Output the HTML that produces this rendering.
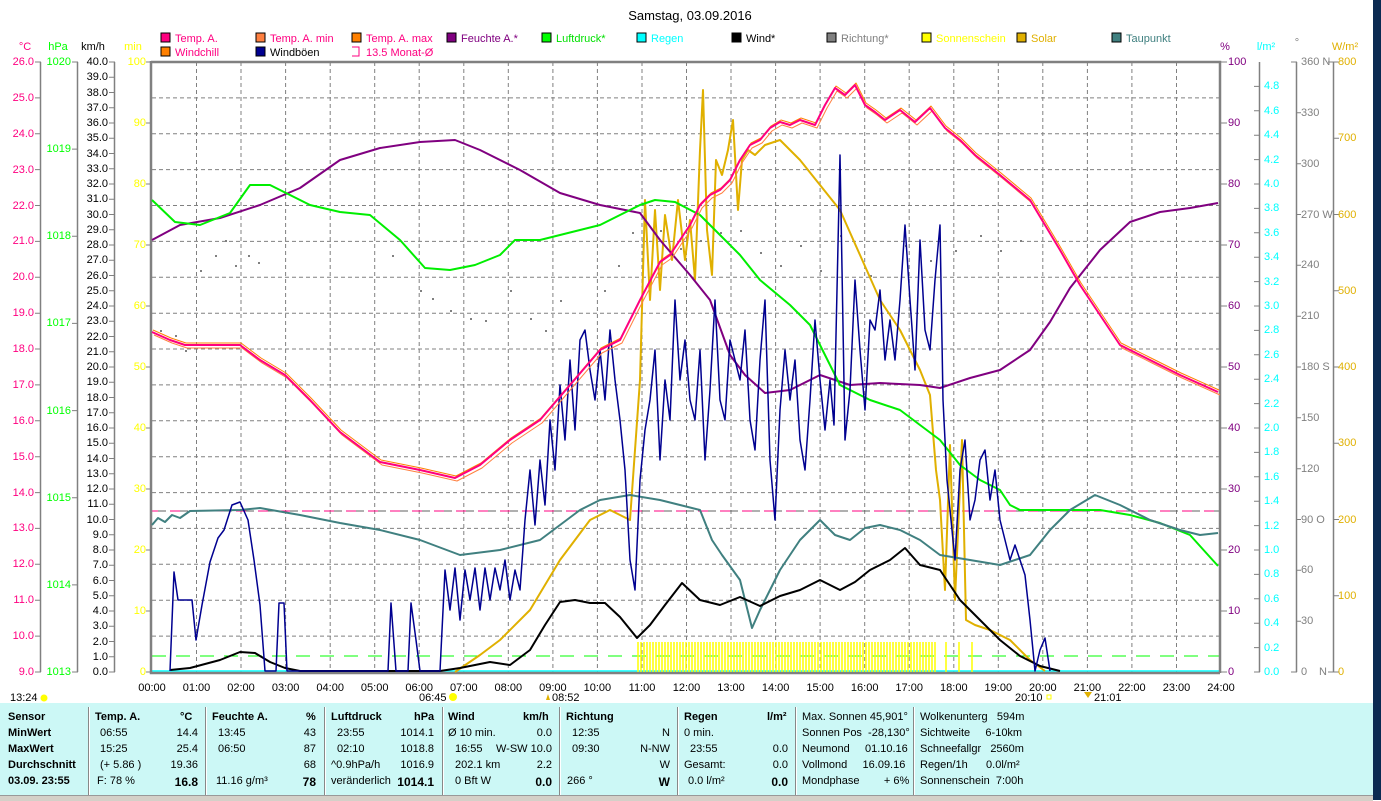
<!DOCTYPE html>
<html><head><meta charset="utf-8"><style>
html,body{margin:0;padding:0;background:#fff;width:1381px;height:800px;overflow:hidden;font-family:"Liberation Sans",sans-serif;}
svg{position:absolute;left:0;top:0}
#panel{position:absolute;left:0;top:703px;width:1373px;height:92px;background:#ccf8f6;font-size:11px;color:#000}
#panel div{position:absolute;white-space:nowrap}
.b{font-weight:bold}
.r{text-align:right}
.sep{position:absolute;top:4px;width:1px;height:88px;background:#888;border-right:1px solid #fff}
#rb{position:absolute;left:1373px;top:0;width:8px;height:800px;background:#0b2a52}
#sb{position:absolute;left:0;top:795px;width:1373px;height:5px;background:#d4d0c8;border-top:1px solid #999}
</style></head><body>
<svg width="1381" height="800" xmlns="http://www.w3.org/2000/svg" font-family="Liberation Sans, sans-serif" font-size="11">
<text x="690" y="20" text-anchor="middle" font-size="13" fill="#000">Samstag, 03.09.2016</text>
<!-- legend -->
<g stroke="#000" stroke-width="1">
<rect x="161" y="33" width="9" height="9" fill="#ff0080"/><rect x="256" y="33" width="9" height="9" fill="#ff8040"/><rect x="352" y="33" width="9" height="9" fill="#ff8000"/><rect x="447" y="33" width="9" height="9" fill="#800080"/><rect x="542" y="33" width="9" height="9" fill="#00ff00"/><rect x="637" y="33" width="9" height="9" fill="#00ffff"/><rect x="732" y="33" width="9" height="9" fill="#000"/><rect x="827" y="33" width="9" height="9" fill="#808080"/><rect x="922" y="33" width="9" height="9" fill="#ffff00"/><rect x="1017" y="33" width="9" height="9" fill="#e0b000"/><rect x="1112" y="33" width="9" height="9" fill="#408080"/>
<rect x="161" y="47" width="9" height="9" fill="#ff8000"/><rect x="256" y="47" width="9" height="9" fill="#000090"/>
</g>
<path d="M352 47h7v9h-7" fill="none" stroke="#ff0080"/>
<g fill="#ff0080"><text x="175" y="42">Temp. A.</text><text x="270" y="42">Temp. A. min</text><text x="366" y="42">Temp. A. max</text><text x="175" y="56">Windchill</text><text x="366" y="56">13.5 Monat-Ø</text></g>
<text x="270" y="56" fill="#000">Windböen</text>
<text x="461" y="42" fill="#800080">Feuchte A.*</text><text x="556" y="42" fill="#00e000">Luftdruck*</text><text x="651" y="42" fill="#00ffff">Regen</text><text x="746" y="42" fill="#000">Wind*</text><text x="841" y="42" fill="#808080">Richtung*</text><text x="936" y="42" fill="#ffff00">Sonnenschein</text><text x="1031" y="42" fill="#e0b000">Solar</text><text x="1126" y="42" fill="#408080">Taupunkt</text>
<!-- units -->
<text x="25" y="50" text-anchor="middle" fill="#ff0080">°C</text><text x="58" y="50" text-anchor="middle" fill="#00ff00">hPa</text><text x="93" y="50" text-anchor="middle">km/h</text><text x="133" y="50" text-anchor="middle" fill="#ffff00">min</text>
<text x="1225" y="50" text-anchor="middle" fill="#800080">%</text><text x="1266" y="50" text-anchor="middle" fill="#00ffff">l/m²</text><text x="1297" y="46" text-anchor="middle" fill="#808080">°</text><text x="1345" y="50" text-anchor="middle" fill="#e0b000">W/m²</text>
<!-- axis lines -->
<g stroke="#808080" stroke-width="1.5" fill="none">
<path d="M40.5 62V672M77.5 62V672M114.5 62V672M1259.5 62V672M1296.5 62V672M1333.5 62V672"/>
</g>
<g stroke="#808080" stroke-width="1">
<path d="M35 62h6M35 97.9h6M35 133.8h6M35 169.6h6M35 205.5h6M35 241.4h6M35 277.3h6M35 313.2h6M35 349h6M35 384.9h6M35 420.8h6M35 456.7h6M35 492.6h6M35 528.4h6M35 564.3h6M35 600.2h6M35 636.1h6M35 672h6"/>
<path d="M72 62h6M72 149.1h6M72 236.3h6M72 323.4h6M72 410.6h6M72 497.7h6M72 584.9h6M72 672h6"/>
<path d="M109 62h6M109 77.25h6M109 92.5h6M109 107.75h6M109 123h6M109 138.25h6M109 153.5h6M109 168.75h6M109 184h6M109 199.25h6M109 214.5h6M109 229.75h6M109 245h6M109 260.25h6M109 275.5h6M109 290.75h6M109 306h6M109 321.25h6M109 336.5h6M109 351.75h6M109 367h6M109 382.25h6M109 397.5h6M109 412.75h6M109 428h6M109 443.25h6M109 458.5h6M109 473.75h6M109 489h6M109 504.25h6M109 519.5h6M109 534.75h6M109 550h6M109 565.25h6M109 580.5h6M109 595.75h6M109 611h6M109 626.25h6M109 641.5h6M109 656.75h6M109 672h6"/>
<path d="M146 62h5M146 123h5M146 184h5M146 245h5M146 306h5M146 367h5M146 428h5M146 489h5M146 550h5M146 611h5M146 672h5"/>
<path d="M1219 62h8M1219 123h8M1219 184h8M1219 245h8M1219 306h8M1219 367h8M1219 428h8M1219 489h8M1219 550h8M1219 611h8M1219 672h8"/>
<path d="M1254 86.4h6M1254 110.8h6M1254 135.2h6M1254 159.6h6M1254 184h6M1254 208.4h6M1254 232.8h6M1254 257.2h6M1254 281.6h6M1254 306h6M1254 330.4h6M1254 354.8h6M1254 379.2h6M1254 403.6h6M1254 428h6M1254 452.4h6M1254 476.8h6M1254 501.2h6M1254 525.6h6M1254 550h6M1254 574.4h6M1254 598.8h6M1254 623.2h6M1254 647.6h6M1254 672h6"/>
<path d="M1291 62h6M1297 112.8h4M1297 163.7h4M1297 214.5h4M1297 265.3h4M1297 316.2h4M1297 367h4M1297 417.8h4M1297 468.7h4M1297 519.5h4M1297 570.3h4M1297 621.2h4M1291 672h6"/>
<path d="M1328 62h11M1334 138.25h5M1334 214.5h5M1334 290.75h5M1334 367h5M1334 443.25h5M1334 519.5h5M1334 595.75h5M1328 672h11"/>
</g>
<!-- left labels -->
<g fill="#ff0080" text-anchor="end" dominant-baseline="middle">
<text x="34" y="62">26.0</text><text x="34" y="98">25.0</text><text x="34" y="134">24.0</text><text x="34" y="170">23.0</text><text x="34" y="206">22.0</text><text x="34" y="241">21.0</text><text x="34" y="277">20.0</text><text x="34" y="313">19.0</text><text x="34" y="349">18.0</text><text x="34" y="385">17.0</text><text x="34" y="421">16.0</text><text x="34" y="457">15.0</text><text x="34" y="493">14.0</text><text x="34" y="528">13.0</text><text x="34" y="564">12.0</text><text x="34" y="600">11.0</text><text x="34" y="636">10.0</text><text x="34" y="672">9.0</text>
</g>
<g fill="#00ff00" text-anchor="end" dominant-baseline="middle">
<text x="71" y="62">1020</text><text x="71" y="149">1019</text><text x="71" y="236">1018</text><text x="71" y="323">1017</text><text x="71" y="411">1016</text><text x="71" y="498">1015</text><text x="71" y="585">1014</text><text x="71" y="672">1013</text>
</g>
<g fill="#000" text-anchor="end" dominant-baseline="middle">
<text x="108" y="62">40.0</text><text x="108" y="77">39.0</text><text x="108" y="93">38.0</text><text x="108" y="108">37.0</text><text x="108" y="123">36.0</text><text x="108" y="138">35.0</text><text x="108" y="154">34.0</text><text x="108" y="169">33.0</text><text x="108" y="184">32.0</text><text x="108" y="199">31.0</text><text x="108" y="215">30.0</text><text x="108" y="230">29.0</text><text x="108" y="245">28.0</text><text x="108" y="260">27.0</text><text x="108" y="276">26.0</text><text x="108" y="291">25.0</text><text x="108" y="306">24.0</text><text x="108" y="321">23.0</text><text x="108" y="337">22.0</text><text x="108" y="352">21.0</text><text x="108" y="367">20.0</text><text x="108" y="382">19.0</text><text x="108" y="398">18.0</text><text x="108" y="413">17.0</text><text x="108" y="428">16.0</text><text x="108" y="443">15.0</text><text x="108" y="459">14.0</text><text x="108" y="474">13.0</text><text x="108" y="489">12.0</text><text x="108" y="504">11.0</text><text x="108" y="520">10.0</text><text x="108" y="535">9.0</text><text x="108" y="550">8.0</text><text x="108" y="565">7.0</text><text x="108" y="581">6.0</text><text x="108" y="596">5.0</text><text x="108" y="611">4.0</text><text x="108" y="626">3.0</text><text x="108" y="642">2.0</text><text x="108" y="657">1.0</text><text x="108" y="672">0.0</text>
</g>
<g fill="#ffff00" text-anchor="end" dominant-baseline="middle">
<text x="146" y="62">100</text><text x="146" y="123">90</text><text x="146" y="184">80</text><text x="146" y="245">70</text><text x="146" y="306">60</text><text x="146" y="367">50</text><text x="146" y="428">40</text><text x="146" y="489">30</text><text x="146" y="550">20</text><text x="146" y="611">10</text><text x="146" y="672">0</text>
</g>
<!-- right labels -->
<g fill="#800080" dominant-baseline="middle">
<text x="1228" y="62">100</text><text x="1228" y="123">90</text><text x="1228" y="184">80</text><text x="1228" y="245">70</text><text x="1228" y="306">60</text><text x="1228" y="367">50</text><text x="1228" y="428">40</text><text x="1228" y="489">30</text><text x="1228" y="550">20</text><text x="1228" y="611">10</text><text x="1228" y="672">0</text>
</g>
<g fill="#00ffff" dominant-baseline="middle">
<text x="1264" y="86">4.8</text><text x="1264" y="111">4.6</text><text x="1264" y="135">4.4</text><text x="1264" y="160">4.2</text><text x="1264" y="184">4.0</text><text x="1264" y="208">3.8</text><text x="1264" y="233">3.6</text><text x="1264" y="257">3.4</text><text x="1264" y="282">3.2</text><text x="1264" y="306">3.0</text><text x="1264" y="330">2.8</text><text x="1264" y="355">2.6</text><text x="1264" y="379">2.4</text><text x="1264" y="404">2.2</text><text x="1264" y="428">2.0</text><text x="1264" y="452">1.8</text><text x="1264" y="477">1.6</text><text x="1264" y="501">1.4</text><text x="1264" y="526">1.2</text><text x="1264" y="550">1.0</text><text x="1264" y="574">0.8</text><text x="1264" y="599">0.6</text><text x="1264" y="623">0.4</text><text x="1264" y="648">0.2</text><text x="1264" y="672">0.0</text>
</g>
<g fill="#808080" dominant-baseline="middle">
<text x="1301" y="62">360 N</text><text x="1301" y="113">330</text><text x="1301" y="164">300</text><text x="1301" y="215">270 W</text><text x="1301" y="265">240</text><text x="1301" y="316">210</text><text x="1301" y="367">180 S</text><text x="1301" y="418">150</text><text x="1301" y="469">120</text><text x="1301" y="520">90 O</text><text x="1301" y="570">60</text><text x="1301" y="621">30</text><text x="1301" y="672">0</text><text x="1319" y="672">N</text>
</g>
<g fill="#e0b000" dominant-baseline="middle">
<text x="1338" y="62">800</text><text x="1338" y="138">700</text><text x="1338" y="215">600</text><text x="1338" y="291">500</text><text x="1338" y="367">400</text><text x="1338" y="443">300</text><text x="1338" y="520">200</text><text x="1338" y="596">100</text><text x="1338" y="672">0</text>
</g>
<!-- grid -->
<g stroke="#808080" stroke-width="1" stroke-dasharray="4,3">
<path d="M196.5 62V672M241 62V672M285.6 62V672M330.2 62V672M374.7 62V672M419.2 62V672M463.8 62V672M508.3 62V672M552.9 62V672M597.4 62V672M642 62V672M686.5 62V672M731 62V672M775.6 62V672M820.1 62V672M864.7 62V672M909.2 62V672M953.8 62V672M998.3 62V672M1042.8 62V672M1087.4 62V672M1131.9 62V672M1176.5 62V672"/>
<path d="M152 97.9H1219M152 133.8H1219M152 169.6H1219M152 205.5H1219M152 241.4H1219M152 277.3H1219M152 313.2H1219M152 349H1219M152 384.9H1219M152 420.8H1219M152 456.7H1219M152 492.6H1219M152 528.4H1219M152 564.3H1219M152 600.2H1219M152 636.1H1219"/>
</g>
<path d="M152 511H1219" stroke="#606060" stroke-dasharray="14,8"/>
<path d="M152 511H1219" stroke="#ff0080" stroke-dasharray="10,12" stroke-dashoffset="4"/>
<path d="M152 656H1219" stroke="#00ff00" stroke-dasharray="14,10"/>
<path d="M152 671H1219" stroke="#00ffff" stroke-width="1.5"/>
<!-- border -->
<path d="M151 62H1220V673M151 61V673H1220" fill="none" stroke="#808080" stroke-width="2.5"/>
<!-- direction dots -->
<g fill="#808080">
<rect x="160" y="330" width="2" height="2"/><rect x="175" y="335" width="2" height="2"/><rect x="185" y="350" width="2" height="2"/><rect x="200" y="270" width="2" height="2"/><rect x="215" y="255" width="2" height="2"/><rect x="225" y="240" width="2" height="2"/><rect x="235" y="265" width="2" height="2"/><rect x="248" y="255" width="2" height="2"/><rect x="258" y="262" width="2" height="2"/><rect x="392" y="255" width="2" height="2"/><rect x="420" y="290" width="2" height="2"/><rect x="432" y="298" width="2" height="2"/><rect x="450" y="310" width="2" height="2"/><rect x="470" y="318" width="2" height="2"/><rect x="485" y="320" width="2" height="2"/><rect x="510" y="290" width="2" height="2"/><rect x="530" y="318" width="2" height="2"/><rect x="545" y="330" width="2" height="2"/><rect x="560" y="300" width="2" height="2"/><rect x="604" y="290" width="2" height="2"/><rect x="618" y="265" width="2" height="2"/><rect x="632" y="232" width="2" height="2"/><rect x="660" y="230" width="2" height="2"/><rect x="680" y="248" width="2" height="2"/><rect x="700" y="240" width="2" height="2"/><rect x="720" y="232" width="2" height="2"/><rect x="740" y="230" width="2" height="2"/><rect x="760" y="252" width="2" height="2"/><rect x="780" y="265" width="2" height="2"/><rect x="800" y="245" width="2" height="2"/><rect x="820" y="270" width="2" height="2"/><rect x="840" y="235" width="2" height="2"/><rect x="870" y="275" width="2" height="2"/><rect x="905" y="245" width="2" height="2"/><rect x="930" y="260" width="2" height="2"/><rect x="955" y="250" width="2" height="2"/><rect x="980" y="235" width="2" height="2"/><rect x="1000" y="250" width="2" height="2"/><rect x="1020" y="240" width="2" height="2"/>
</g>
<!-- sunshine bars -->
<g stroke="#ffff00" stroke-width="1.5">
<path d="M638 672V642M641 672V642M644 672V642M647 672V642M650 672V642M653 672V642M656 672V642M659 672V642M662 672V642M665 672V642M668 672V642M671 672V642M674 672V642M677 672V642M680 672V642M683 672V642M686 672V642M689 672V642M692 672V642M695 672V642M698 672V642M701 672V642M704 672V642M707 672V642M710 672V642M713 672V642M716 672V642M719 672V642M722 672V642M725 672V642M728 672V642M731 672V642M734 672V642M737 672V642M740 672V642M743 672V642M746 672V642M749 672V642M752 672V642M755 672V642M758 672V642M761 672V642M764 672V642M767 672V642M770 672V642M773 672V642M776 672V642M779 672V642M782 672V642M785 672V642M788 672V642M791 672V642M794 672V642M797 672V642M800 672V642M803 672V642M806 672V642M809 672V642M812 672V642M815 672V642M818 672V642M821 672V642M824 672V642M827 672V642M830 672V642M833 672V642M836 672V642M839 672V642M842 672V642M845 672V642M848 672V642M851 672V642M854 672V642M857 672V642M860 672V642M863 672V642M866 672V642M869 672V642M872 672V642M875 672V642M878 672V642M881 672V642M884 672V642M887 672V642M890 672V642M893 672V642M896 672V642M899 672V642M902 672V642M905 672V642M908 672V642M911 672V642M914 672V642M917 672V642M920 672V642M923 672V642M926 672V642M929 672V642M932 672V642M935 672V642M946 672V642M959 672V642M972 672V642"/>
</g>
<g fill="none" stroke-linejoin="round">
<!-- solar -->
<polyline stroke="#e0b000" stroke-width="2" points="455,672 480,655 500,640 530,610 560,560 590,520 610,510 630,520 640,380 645,200 650,300 655,210 660,290 665,215 672,260 678,200 685,260 690,220 695,280 700,150 703,90 707,230 712,275 716,160 722,175 728,150 733,120 738,210 742,160 748,150 755,155 765,145 780,140 790,150 800,160 820,185 840,210 860,255 880,300 900,330 920,370 930,395 936,470 940,500 945,590 950,445 955,600 962,440 966,620 975,625 990,630 1010,640 1030,660 1045,671"/>
<!-- humidity -->
<polyline stroke="#800080" stroke-width="2" points="152,240 180,225 220,218 260,205 300,188 340,160 380,148 420,142 455,140 480,150 520,170 560,193 600,205 640,213 660,240 690,275 710,300 730,355 745,375 765,393 790,390 820,375 850,385 880,383 920,385 940,388 970,378 1000,370 1030,350 1050,322 1070,288 1100,250 1130,222 1160,212 1190,208 1218,203"/>
<!-- pressure -->
<polyline stroke="#00ee00" stroke-width="2" points="152,200 175,222 200,225 230,213 250,185 270,185 290,195 310,205 340,212 370,215 400,240 425,268 450,270 475,265 500,255 515,240 540,240 560,235 580,230 600,225 620,215 640,205 655,200 675,202 700,215 720,235 740,255 760,280 790,305 810,325 825,355 840,385 870,400 900,410 920,425 940,440 960,465 980,480 1000,490 1010,505 1020,510 1060,510 1100,510 1130,515 1160,523 1190,535 1218,566"/>
<!-- dewpoint -->
<polyline stroke="#408080" stroke-width="2" points="152,525 158,518 165,522 172,515 180,518 190,511 240,510 260,508 300,515 340,523 380,530 420,540 460,555 500,550 540,540 560,525 580,510 600,500 630,495 660,500 680,505 700,510 712,540 722,555 740,580 752,628 760,610 770,590 780,570 800,540 820,520 835,535 850,540 865,528 880,525 900,530 920,540 940,555 970,560 1000,565 1030,555 1050,530 1070,510 1095,495 1120,505 1150,520 1180,530 1200,535 1218,533"/>
<!-- wind avg -->
<polyline stroke="#000" stroke-width="2" points="170,670 190,668 220,660 240,652 255,653 270,662 285,668 300,671 440,671 460,668 490,662 510,665 530,650 545,625 560,602 575,600 590,603 605,603 620,617 637,638 650,625 665,605 682,583 700,600 720,605 740,597 760,606 780,596 800,590 820,580 840,590 855,582 870,570 890,560 905,548 920,565 940,570 960,600 980,620 1000,640 1020,656 1040,666 1060,671"/>
<!-- gusts -->
<polyline stroke="#000090" stroke-width="1.5" points="170,671 174,572 178,600 192,600 196,640 202,605 210,562 218,538 224,530 232,505 240,502 248,520 254,560 260,605 265,671 276,671 279,603 284,603 287,671 388,671 391,603 396,671 408,671 411,603 416,640 420,671 440,671 445,570 450,610 455,568 460,620 465,570 470,600 475,568 480,610 485,568 490,600 495,568 500,590 505,560 510,600 515,570 520,590 525,520 530,470 535,525 540,460 545,505 550,420 555,470 560,385 565,440 570,360 575,430 580,340 585,330 590,370 595,400 600,350 605,400 610,330 615,380 620,420 625,470 630,560 635,590 640,480 645,430 650,400 655,350 660,460 665,380 670,420 675,300 680,380 685,340 690,400 695,420 700,350 705,460 710,390 715,300 720,400 725,420 730,340 735,360 740,380 745,330 750,420 755,450 760,360 765,300 770,460 775,520 780,410 785,350 790,400 795,360 800,440 805,470 810,400 815,320 820,380 825,430 830,380 834,425 840,155 845,440 850,390 855,280 860,350 865,410 870,320 875,330 880,290 885,360 890,320 895,360 900,300 905,225 910,300 915,370 920,240 925,330 930,350 935,280 940,225 943,400 947,480 951,520 955,560 960,470 965,440 970,520 975,500 980,460 985,450 990,500 995,470 1000,520 1005,540 1010,560 1015,545 1020,560 1025,575 1030,620 1035,671 1040,650 1045,638 1050,671"/>
<!-- temp lines -->
<polyline stroke="#ff8040" stroke-width="1" transform="translate(2,3)" points="152,332 170,340 185,345 240,345 260,360 285,375 310,400 340,432 380,462 420,470 455,478 480,465 510,440 540,420 570,385 600,350 620,340 640,300 660,262 670,255 680,240 690,225 700,205 710,195 720,190 730,180 740,160 750,145 760,140 770,128 780,122 790,125 800,120 815,125 825,105 835,88 845,95 855,85 865,105 875,112 885,120 900,110 915,122 930,108 945,128 960,140 975,155 1000,175 1030,200 1060,250 1080,285 1100,315 1120,345 1150,360 1180,375 1218,392"/>
<polyline stroke="#ff8000" stroke-width="1" transform="translate(1,-2)" points="152,332 170,340 185,345 240,345 260,360 285,375 310,400 340,432 380,462 420,470 455,478 480,465 510,440 540,420 570,385 600,350 620,340 640,300 660,262 670,255 680,240 690,225 700,205 710,195 720,190 730,180 740,160 750,145 760,140 770,128 780,122 790,125 800,120 815,125 825,105 835,88 845,95 855,85 865,105 875,112 885,120 900,110 915,122 930,108 945,128 960,140 975,155 1000,175 1030,200 1060,250 1080,285 1100,315 1120,345 1150,360 1180,375 1218,392"/>
<polyline stroke="#ff0080" stroke-width="2" points="152,332 170,340 185,345 240,345 260,360 285,375 310,400 340,432 380,462 420,470 455,478 480,465 510,440 540,420 570,385 600,350 620,340 640,300 660,262 670,255 680,240 690,225 700,205 710,195 720,190 730,180 740,160 750,145 760,140 770,128 780,122 790,125 800,120 815,125 825,105 835,88 845,95 855,85 865,105 875,112 885,120 900,110 915,122 930,108 945,128 960,140 975,155 1000,175 1030,200 1060,250 1080,285 1100,315 1120,345 1150,360 1180,375 1218,392"/>
</g>
<!-- time labels -->
<g text-anchor="middle" fill="#000">
<text x="152" y="691">00:00</text><text x="196.5" y="691">01:00</text><text x="241" y="691">02:00</text><text x="285.6" y="691">03:00</text><text x="330.2" y="691">04:00</text><text x="374.7" y="691">05:00</text><text x="419.2" y="691">06:00</text><text x="463.8" y="691">07:00</text><text x="508.3" y="691">08:00</text><text x="552.9" y="691">09:00</text><text x="597.4" y="691">10:00</text><text x="642" y="691">11:00</text><text x="686.5" y="691">12:00</text><text x="731" y="691">13:00</text><text x="775.6" y="691">14:00</text><text x="820.1" y="691">15:00</text><text x="864.7" y="691">16:00</text><text x="909.2" y="691">17:00</text><text x="953.8" y="691">18:00</text><text x="998.3" y="691">19:00</text><text x="1042.8" y="691">20:00</text><text x="1087.4" y="691">21:00</text><text x="1131.9" y="691">22:00</text><text x="1176.5" y="691">23:00</text><text x="1221" y="691">24:00</text>
</g>
<text x="10" y="701">13:24</text><circle cx="44" cy="698" r="3.5" fill="#ffff00"/>
<text x="419" y="701">06:45</text><circle cx="453" cy="697" r="4" fill="#ffff00"/>
<text x="552" y="701">08:52</text><path d="M548 694l-2 6h4z" fill="#e0b000"/>
<text x="1015" y="701">20:10</text><rect x="1047" y="695" width="4" height="4" fill="none" stroke="#ffff00"/>
<text x="1094" y="701">21:01</text><path d="M1084 692l4 6l4-6z" fill="#e0b000"/>
</svg>
<div id="panel">
<div class="b" style="left:8px;top:8px">Sensor</div><div class="b" style="left:8px;top:24px">MinWert</div><div class="b" style="left:8px;top:40px">MaxWert</div><div class="b" style="left:8px;top:56px">Durchschnitt</div><div class="b" style="left:8px;top:72px">03.09. 23:55</div>
<span class="sep" style="left:88px"></span>
<div class="b" style="left:95px;top:8px">Temp. A.</div><div class="b" style="left:180px;top:8px">°C</div>
<div style="left:100px;top:24px">06:55</div><div class="r" style="right:1175px;top:24px">14.4</div>
<div style="left:100px;top:40px">15:25</div><div class="r" style="right:1175px;top:40px">25.4</div>
<div style="left:100px;top:56px">(+ 5.86 )</div><div class="r" style="right:1175px;top:56px">19.36</div>
<div style="left:97px;top:72px">F: 78 %</div><div class="r b" style="right:1175px;top:72px;font-size:12px">16.8</div>
<span class="sep" style="left:205px"></span>
<div class="b" style="left:212px;top:8px">Feuchte A.</div><div class="b" style="left:306px;top:8px">%</div>
<div style="left:218px;top:24px">13:45</div><div style="right:1057px;top:24px">43</div>
<div style="left:218px;top:40px">06:50</div><div style="right:1057px;top:40px">87</div>
<div style="right:1057px;top:56px">68</div>
<div style="left:216px;top:72px">11.16 g/m³</div><div class="b" style="right:1057px;top:72px;font-size:12px">78</div>
<span class="sep" style="left:324px"></span>
<div class="b" style="left:331px;top:8px">Luftdruck</div><div class="b" style="left:414px;top:8px">hPa</div>
<div style="left:337px;top:24px">23:55</div><div style="right:939px;top:24px">1014.1</div>
<div style="left:337px;top:40px">02:10</div><div style="right:939px;top:40px">1018.8</div>
<div style="left:331px;top:56px">^0.9hPa/h</div><div style="right:939px;top:56px">1016.9</div>
<div style="left:331px;top:72px">veränderlich</div><div class="b" style="right:939px;top:72px;font-size:12px">1014.1</div>
<span class="sep" style="left:442px"></span>
<div class="b" style="left:448px;top:8px">Wind</div><div class="b" style="left:523px;top:8px">km/h</div>
<div style="left:448px;top:24px">Ø 10 min.</div><div style="right:821px;top:24px">0.0</div>
<div style="left:455px;top:40px">16:55</div><div style="right:821px;top:40px">W-SW 10.0</div>
<div style="left:455px;top:56px">202.1 km</div><div style="right:821px;top:56px">2.2</div>
<div style="left:455px;top:72px">0 Bft W</div><div class="b" style="right:821px;top:72px;font-size:12px">0.0</div>
<span class="sep" style="left:559px"></span>
<div class="b" style="left:566px;top:8px">Richtung</div>
<div style="left:572px;top:24px">12:35</div><div style="right:703px;top:24px">N</div>
<div style="left:572px;top:40px">09:30</div><div style="right:703px;top:40px">N-NW</div>
<div style="right:703px;top:56px">W</div>
<div style="left:567px;top:72px">266 °</div><div class="b" style="right:703px;top:72px;font-size:12px">W</div>
<span class="sep" style="left:677px"></span>
<div class="b" style="left:684px;top:8px">Regen</div><div class="b" style="left:767px;top:8px">l/m²</div>
<div style="left:684px;top:24px">0 min.</div>
<div style="left:690px;top:40px">23:55</div><div style="right:585px;top:40px">0.0</div>
<div style="left:684px;top:56px">Gesamt:</div><div style="right:585px;top:56px">0.0</div>
<div style="left:688px;top:72px">0.0 l/m²</div><div class="b" style="right:585px;top:72px;font-size:12px">0.0</div>
<span class="sep" style="left:795px"></span>
<div style="left:802px;top:8px">Max. Sonnen 45,901°</div><div style="left:802px;top:24px">Sonnen Pos&nbsp; -28,130°</div><div style="left:802px;top:40px">Neumond&nbsp;&nbsp;&nbsp;&nbsp; 01.10.16</div><div style="left:802px;top:56px">Vollmond&nbsp;&nbsp;&nbsp;&nbsp; 16.09.16</div><div style="left:802px;top:72px">Mondphase&nbsp;&nbsp;&nbsp;&nbsp;&nbsp;&nbsp;&nbsp; + 6%</div>
<span class="sep" style="left:913px"></span>
<div style="left:920px;top:8px">Wolkenunterg&nbsp;&nbsp; 594m</div><div style="left:920px;top:24px">Sichtweite&nbsp;&nbsp;&nbsp;&nbsp; 6-10km</div><div style="left:920px;top:40px">Schneefallgr&nbsp;&nbsp; 2560m</div><div style="left:920px;top:56px">Regen/1h&nbsp;&nbsp;&nbsp;&nbsp;&nbsp; 0.0l/m²</div><div style="left:920px;top:72px">Sonnenschein&nbsp; 7:00h</div>
</div>
<div id="sb"></div>
<div id="rb"></div>
</body></html>
